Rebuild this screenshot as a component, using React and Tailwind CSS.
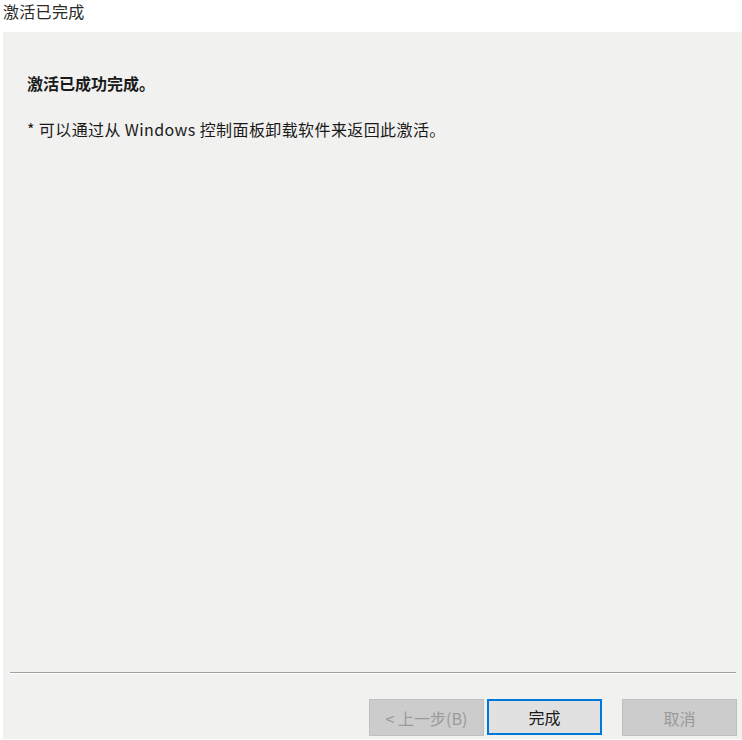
import React from "react";

const font = { fontFamily: '"Noto Sans CJK SC", "Noto Sans", sans-serif' };

const App = () => {
  return (
    <div className="w-[742px] h-[740px] bg-white flex flex-col text-[#1a1a1a]" style={font}>
      <div className="h-[32px] pl-[3px] pt-[3px] text-[16px] leading-[16px] tracking-[0.3px] text-[#2a2a2a]">激活已完成</div>
      <div className="flex-1 ml-[3px] mb-[1px] bg-[#f1f1f0] flex flex-col">
        <div className="pl-[24px] pt-[43px] text-[16px] leading-[16px] font-bold">激活已成功完成。</div>
        <div className="pl-[24px] pt-[30px] text-[16px] leading-[16px] tracking-[0.4px]">* 可以通过从 Windows 控制面板卸载软件来返回此激活。</div>
        <div className="mt-auto ml-[7px] mr-[6px] border-t border-[#a0a0a0] border-b-[1px] border-b-white"></div>
        <div className="flex justify-end items-start pt-[25px] pb-[3px] pr-[5px]">
          <button className="w-[115px] h-[37px] bg-[#cccccc] border border-[#bfbfbf] text-[#9a9a9a] text-[16px] leading-none">
            &lt; 上一步(B)
          </button>
          <button className="ml-[3px] w-[115px] h-[36px] bg-[#e1e1e1] border-2 border-[#0078d7] text-[#1a1a1a] text-[16px] leading-none">
            完成
          </button>
          <button className="ml-[20px] w-[115px] h-[37px] bg-[#cccccc] border border-[#bfbfbf] text-[#9a9a9a] text-[16px] leading-none">
            取消
          </button>
        </div>
      </div>
    </div>
  );
};

export default App;
